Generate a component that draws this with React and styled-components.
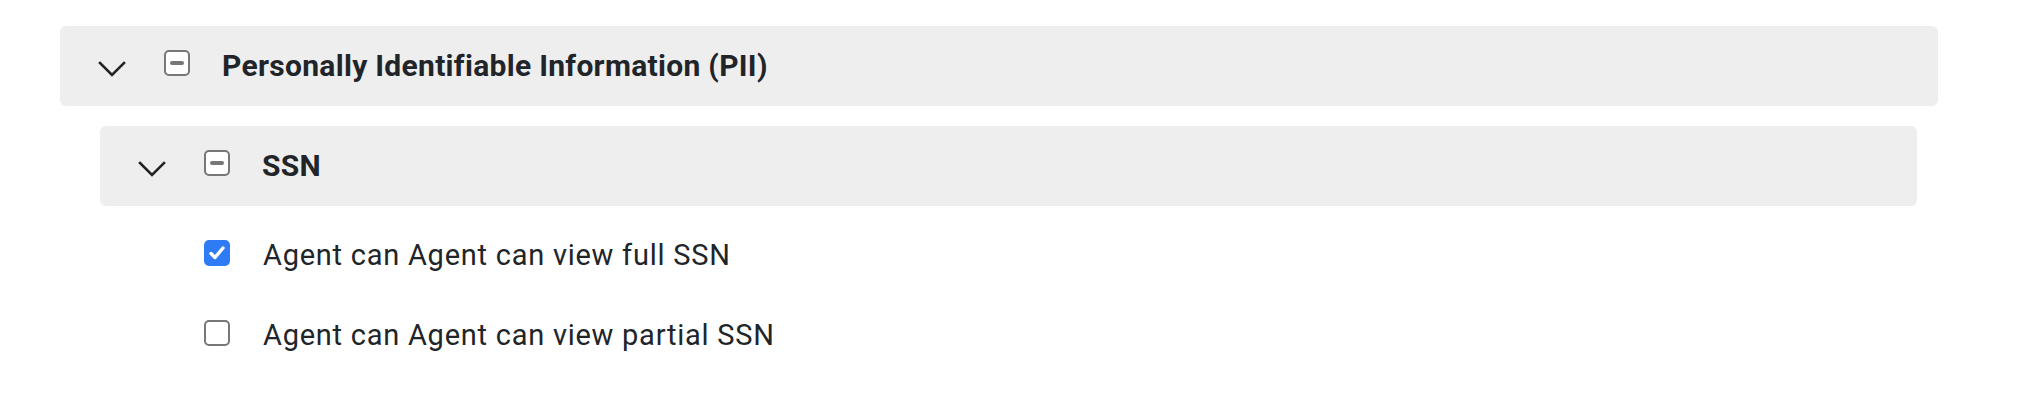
import React from 'react'
import styled, { createGlobalStyle } from 'styled-components'

const Global = createGlobalStyle`
  body {
    margin: 0;
    background: #ffffff;
    font-family: Roboto, "Liberation Sans", Arial, sans-serif;
    color: #212529;
  }
`;

const Page = styled.div`
  padding: 26px 98px 40px 60px;
`;

const Group = styled.section`
  display: flex;
  flex-direction: column;
  margin-left: ${p => p.$indent || 0}px;
  margin-right: ${p => p.$trim || 0}px;
`;

const Header = styled.div`
  display: flex;
  align-items: center;
  height: 80px;
  padding-left: 38px;
  background: #eeeeee;
  border-radius: 6px;
`;

const Chevron = styled.svg`
  width: 28px;
  height: 28px;
  flex: 0 0 auto;
  margin-top: 2px;
`;

const Title = styled.h3`
  margin: -2px 0 0 32px;
  font-size: 30px;
  font-weight: 700;
  letter-spacing: 0.3px;
`;

const Box = styled.span`
  position: relative;
  display: inline-flex;
  align-items: center;
  justify-content: center;
  box-sizing: border-box;
  width: 26px;
  height: 26px;
  flex: 0 0 auto;
  border-radius: 5px;
  border: 2.5px solid ${p => (p.$state === 'checked' ? '#2f7bf5' : '#777777')};
  background: ${p => (p.$state === 'checked' ? '#2f7bf5' : '#ffffff')};
`;

const Dash = styled.span`
  width: 14px;
  height: 4px;
  border-radius: 2px;
  background: #777777;
`;

const Items = styled.ul`
  list-style: none;
  margin: 0;
  padding: 7px 0 0 104px;
`;

const Item = styled.li`
  display: flex;
  align-items: center;
  height: 80px;
`;

const Label = styled.label`
  margin: 3px 0 0 33px;
  font-size: 29px;
  font-weight: 400;
  letter-spacing: 0.75px;
`;

const ChevronDown = () => (
  <Chevron viewBox="0 0 28 28">
    <path d="M2 10 L14 22 L26 10" fill="none" stroke="#222" strokeWidth="2.6" strokeLinecap="square" />
  </Chevron>
)

const Check = ({ state }) => (
  <Box $state={state} style={state === 'indeterminate' ? { marginTop: '-6px', marginLeft: '38px' } : undefined}>
    {state === 'indeterminate' && <Dash />}
    {state === 'checked' && (
      <svg width="18" height="18" viewBox="0 0 18 18">
        <path d="M3 9.5 L7 13.5 L15 4" fill="none" stroke="#fff" strokeWidth="3.4" strokeLinecap="round" strokeLinejoin="round" />
      </svg>
    )}
  </Box>
)

const permissions = [
  { id: 'full', label: 'Agent can Agent can view full SSN', checked: true },
  { id: 'partial', label: 'Agent can Agent can view partial SSN', checked: false },
]

export default function App() {
  return (
    <>
      <Global />
      <Page>
        <Group>
          <Header>
            <ChevronDown />
            <Check state="indeterminate" />
            <Title>Personally Identifiable Information (PII)</Title>
          </Header>
        </Group>
        <Group $indent={40} $trim={21} style={{ marginTop: 20 }}>
          <Header>
            <ChevronDown />
            <Check state="indeterminate" />
            <Title>SSN</Title>
          </Header>
          <Items>
            {permissions.map(p => (
              <Item key={p.id}>
                <Check state={p.checked ? 'checked' : 'unchecked'} />
                <Label>{p.label}</Label>
              </Item>
            ))}
          </Items>
        </Group>
      </Page>
    </>
  )
}
